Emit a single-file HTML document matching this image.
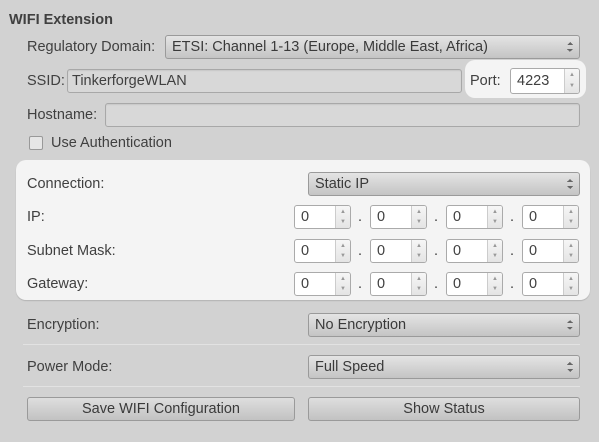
<!DOCTYPE html>
<html><head><meta charset="utf-8"><style>
*{box-sizing:border-box;margin:0;padding:0}
body{width:599px;height:442px;background:#d2d2d2;font-family:"Liberation Sans","DejaVu Sans",sans-serif;font-size:14.5px;color:#404040;position:relative;overflow:hidden}
.a{position:absolute}
.lbl{position:absolute;line-height:16px}
.combo{position:absolute;height:24px;border:1px solid #9a9a9a;border-radius:3px;background:linear-gradient(#e4e4e4,#c4c4c4);padding-left:6px;line-height:22px;color:#3a3a3a}
.combo:after{content:"";position:absolute;right:6px;top:6px;width:6px;height:10px;background:
linear-gradient(135deg,transparent 50%,#666 50%) 0 0/3px 3px no-repeat,
linear-gradient(225deg,transparent 50%,#666 50%) 3px 0/3px 3px no-repeat,
linear-gradient(45deg,transparent 50%,#666 50%) 0 7px/3px 3px no-repeat,
linear-gradient(315deg,transparent 50%,#666 50%) 3px 7px/3px 3px no-repeat}
.inp{position:absolute;height:24px;border:1px solid #a8a8a8;border-radius:3px;background:#d8d8d8;padding-left:4px;line-height:22px;box-shadow:inset 0 1px 1px rgba(0,0,0,.08)}
.spin{position:absolute;width:57px;height:24px;border:1px solid #aaa;border-radius:3px;background:#fff;padding-left:6px;line-height:22px;overflow:hidden}
.spin b{position:absolute;right:0;top:0;width:15px;height:22px;border-left:1px solid #ccc;background:linear-gradient(#f6f6f6,#e4e4e4);font-weight:normal;font-size:6px;color:#999;text-align:center;line-height:10px;padding-top:1px}
.dot{position:absolute;width:10px;text-align:center}
.btn{position:absolute;height:24px;border:1px solid #9a9a9a;border-radius:3px;background:linear-gradient(#dedede,#c2c2c2);text-align:center;line-height:22px;color:#3a3a3a}
.sep{position:absolute;left:23px;width:557px;height:1px;background:#b8b8b8;border-bottom:1px solid #e2e2e2}
</style></head><body>
<div class="lbl" style="left:9px;top:12px;font-weight:bold;font-size:14.5px">WIFI Extension</div>

<div class="lbl" style="left:27px;top:39px">Regulatory Domain:</div>
<div class="combo" style="left:165px;top:35px;width:415px">ETSI: Channel 1-13 (Europe, Middle East, Africa)</div>

<div class="lbl" style="left:27px;top:73px">SSID:</div>
<div class="inp" style="left:67px;top:69px;width:395px">TinkerforgeWLAN</div>

<div class="a" style="left:465px;top:60px;width:121px;height:38px;background:#f4f4f4;border-radius:10px"></div>
<div class="lbl" style="left:470px;top:73px">Port:</div>
<div class="spin" style="left:510px;top:68px;width:70px;height:26px;line-height:24px">4223<b style="height:24px;line-height:11px">▲<br>▼</b></div>

<div class="lbl" style="left:27px;top:107px">Hostname:</div>
<div class="inp" style="left:105px;top:103px;width:475px"></div>

<div class="a" style="left:29px;top:136px;width:14px;height:14px;border:1px solid #999;border-radius:2px;background:#e6e6e6"></div>
<div class="lbl" style="left:51px;top:135px">Use Authentication</div>

<div class="a" style="left:16px;top:160px;width:574px;height:140px;background:#f4f4f4;border-radius:10px;box-shadow:0 1px 1px rgba(0,0,0,.15)"></div>
<div class="lbl" style="left:27px;top:176px">Connection:</div>
<div class="combo" style="left:308px;top:172px;width:272px">Static IP</div>
<div class="lbl" style="left:27px;top:209px">IP:</div>
<div class="lbl" style="left:27px;top:243px">Subnet Mask:</div>
<div class="lbl" style="left:27px;top:276px">Gateway:</div>

<div class="sep" style="top:344px"></div>
<div class="sep" style="top:386px"></div>
<div class="lbl" style="left:27px;top:317px">Encryption:</div>
<div class="combo" style="left:308px;top:313px;width:272px">No Encryption</div>
<div class="lbl" style="left:27px;top:359px">Power Mode:</div>
<div class="combo" style="left:308px;top:355px;width:272px">Full Speed</div>

<div class="btn" style="left:27px;top:397px;width:268px">Save WIFI Configuration</div>
<div class="btn" style="left:308px;top:397px;width:272px">Show Status</div>

<div class="spin" style="left:294px;top:205px">0<b>▲<br>▼</b></div>
<div class="dot" style="left:355px;top:209px">.</div>
<div class="spin" style="left:370px;top:205px">0<b>▲<br>▼</b></div>
<div class="dot" style="left:431px;top:209px">.</div>
<div class="spin" style="left:446px;top:205px">0<b>▲<br>▼</b></div>
<div class="dot" style="left:507px;top:209px">.</div>
<div class="spin" style="left:522px;top:205px">0<b>▲<br>▼</b></div>

<div class="spin" style="left:294px;top:239px">0<b>▲<br>▼</b></div>
<div class="dot" style="left:355px;top:243px">.</div>
<div class="spin" style="left:370px;top:239px">0<b>▲<br>▼</b></div>
<div class="dot" style="left:431px;top:243px">.</div>
<div class="spin" style="left:446px;top:239px">0<b>▲<br>▼</b></div>
<div class="dot" style="left:507px;top:243px">.</div>
<div class="spin" style="left:522px;top:239px">0<b>▲<br>▼</b></div>

<div class="spin" style="left:294px;top:272px">0<b>▲<br>▼</b></div>
<div class="dot" style="left:355px;top:276px">.</div>
<div class="spin" style="left:370px;top:272px">0<b>▲<br>▼</b></div>
<div class="dot" style="left:431px;top:276px">.</div>
<div class="spin" style="left:446px;top:272px">0<b>▲<br>▼</b></div>
<div class="dot" style="left:507px;top:276px">.</div>
<div class="spin" style="left:522px;top:272px">0<b>▲<br>▼</b></div>
</body></html>
